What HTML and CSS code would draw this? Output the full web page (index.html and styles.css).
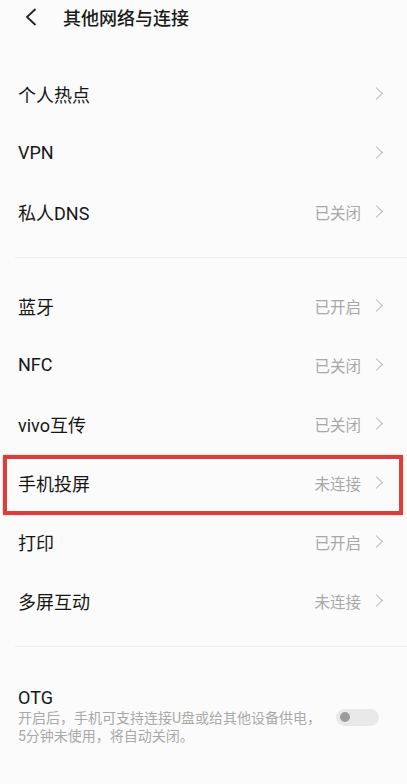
FILE: index.html
```html
<!DOCTYPE html>
<html lang="zh-CN">
<head>
    <meta charset="UTF-8">
    <meta name="viewport" content="width=device-width, initial-scale=1.0">
    <title>其他网络与连接</title>
    <link rel="stylesheet" href="styles.css">
</head>
<body>
    <div class="page">
        <div class="top-bar">
            <svg class="back-icon" width="14" height="18" viewBox="0 0 14 18">
                <path d="M11 1.5 L3 9 L11 16.5" fill="none" stroke="#222" stroke-width="1.8" stroke-linecap="round" stroke-linejoin="round"/>
            </svg>
            <h1>其他网络与连接</h1>
        </div>

        <div class="group">
            <div class="row">
                <span class="label">个人热点</span>
                <span class="arrow"></span>
            </div>
            <div class="row">
                <span class="label">VPN</span>
                <span class="arrow"></span>
            </div>
            <div class="row">
                <span class="label">私人DNS</span>
                <span class="value">已关闭</span>
                <span class="arrow"></span>
            </div>
        </div>

        <div class="divider"></div>

        <div class="group">
            <div class="row">
                <span class="label">蓝牙</span>
                <span class="value">已开启</span>
                <span class="arrow"></span>
            </div>
            <div class="row">
                <span class="label">NFC</span>
                <span class="value">已关闭</span>
                <span class="arrow"></span>
            </div>
            <div class="row">
                <span class="label">vivo互传</span>
                <span class="value">已关闭</span>
                <span class="arrow"></span>
            </div>
            <div class="row marked">
                <span class="label">手机投屏</span>
                <span class="value">未连接</span>
                <span class="arrow"></span>
            </div>
            <div class="row">
                <span class="label">打印</span>
                <span class="value">已开启</span>
                <span class="arrow"></span>
            </div>
            <div class="row">
                <span class="label">多屏互动</span>
                <span class="value">未连接</span>
                <span class="arrow"></span>
            </div>
        </div>

        <div class="divider"></div>

        <div class="otg">
            <div class="otg-text">
                <div class="label">OTG</div>
                <div class="hint">开启后，手机可支持连接U盘或给其他设备供电，<br>5分钟未使用，将自动关闭。</div>
            </div>
            <div class="switch"><span class="knob"></span></div>
        </div>
    </div>
</body>
</html>
```

FILE: styles.css
```css
body {
    margin: 0;
    padding: 0;
    background: #fbfbfb;
    font-family: Roboto, "Noto Sans CJK SC", sans-serif;
    color: #161616;
}

.page {
    width: 407px;
    min-height: 784px;
}

.top-bar {
    display: flex;
    align-items: center;
    height: 34px;
    padding-left: 24px;
    margin-bottom: 30px;
}

.back-icon {
    flex-shrink: 0;
}

.top-bar h1 {
    margin: 0 0 0 25px;
    font-size: 18px;
    font-weight: 500;
    color: #1a1a1a;
}

.row {
    display: flex;
    align-items: center;
    height: 59px;
    padding: 0 24px 0 18px;
    box-sizing: border-box;
}

.label {
    font-size: 18px;
    flex: 1;
}

.value {
    font-size: 15.5px;
    color: #a8a8a8;
    margin-right: 11px;
}

.arrow {
    width: 8px;
    height: 8px;
    border-top: 1.4px solid #b8b8b8;
    border-right: 1.4px solid #b8b8b8;
    transform: rotate(45deg);
    margin-right: 2px;
}

.row.marked {
    position: relative;
}

.row.marked::after {
    content: "";
    position: absolute;
    left: 3px;
    right: 4px;
    top: 2px;
    bottom: -3px;
    border: 4px solid #d8403e;
    box-shadow: 0 0 2px rgba(216, 64, 62, 0.4);
}

.divider {
    height: 1px;
    background: #efefef;
    margin: 16px 0 18px 15px;
}

.otg {
    display: flex;
    align-items: center;
    padding: 22px 28px 0 18px;
}

.otg-text {
    flex: 1;
}

.otg .label {
    font-size: 18px;
    line-height: 22px;
}

.hint {
    font-size: 14px;
    line-height: 18px;
    color: #a9a9a9;
}

.switch {
    width: 43px;
    height: 17px;
    border-radius: 9px;
    background: #e9e9e9;
    display: flex;
    align-items: center;
    padding-left: 4px;
    box-sizing: border-box;
    margin-top: 2px;
}

.knob {
    width: 10px;
    height: 10px;
    border-radius: 50%;
    background: #9c9c9c;
}
```
